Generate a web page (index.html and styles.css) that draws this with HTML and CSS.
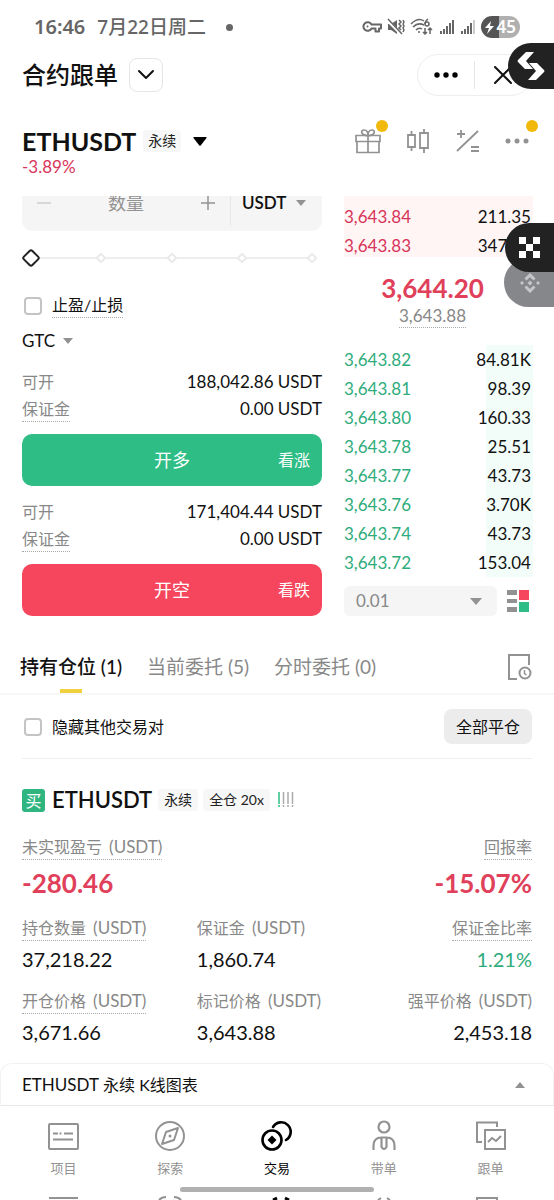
FILE: index.html
```html
<!DOCTYPE html>
<html lang="zh-CN">
<head>
<meta charset="utf-8">
<meta name="viewport" content="width=device-width, initial-scale=1">
<title>合约跟单</title>
<link rel="stylesheet" href="styles.css">
</head>
<body>
<div class="app">
  <div class="status">
    <span class="time">16:46</span><span class="date">7月22日周二</span><span class="status-dot"></span>
    <div class="status-icons">
      <svg width="20" height="14" viewBox="0 0 20 14" fill="none" stroke="#666" stroke-width="2"><path d="M9.500 4.500H19V8.500H17V11.500H13.500V8.500H9.500A4.300 4.300 0 1 1 9.500 4.500Z" stroke-linejoin="round"/><circle cx="5.500" cy="6.500" r="1" fill="#666" stroke="none"/></svg>
      <svg width="18" height="18" viewBox="0 0 18 18"><path d="M1 6h3l6-4v14l-6-4H1z" fill="#666"/><path d="M0 2l14 14" stroke="#fff" stroke-width="3"/><path d="M1 1l14 15M12 2l2 2-2 2 2 2-2 2 2 2M16 2l1 2-1 2 1 2-1 2 1 2-1 2" fill="none" stroke="#666" stroke-width="1.500"/></svg>
      <svg width="24" height="18" viewBox="0 0 24 18" fill="none" stroke="#666" stroke-width="1.500"><path d="M1 6Q8-1 14 3M3 9Q8 4 14 7M6 12Q9 9 12 11"/><circle cx="9" cy="14" r="1" fill="#666" stroke="none"/><path d="M18 1Q15 3 15 6"/><circle cx="17" cy="6" r="2"/><path d="M15 10v6m-2-2 2 2 2-2M20 16v-6m-2 2 2-2 2 2"/></svg>
      <svg width="16" height="16" viewBox="0 0 16 16" stroke="#666" stroke-width="2"><path d="M2 15v-3M5 15v-5M8 15V7M11 15V4M14 15V1"/></svg>
      <svg width="16" height="16" viewBox="0 0 16 16" stroke="#666" stroke-width="2"><path d="M2 15v-3M5 15v-5M8 15V7M11 15V4"/><path d="M14 15V1" stroke="#ccc"/></svg>
      <span class="battery"><svg width="9" height="13" viewBox="0 0 9 13"><path d="M6 0 0 7h4L2 13l7-8H5z" fill="#fff"/></svg>45</span>
    </div>
  </div>

  <header class="titlebar">
    <h1>合约跟单</h1>
    <button class="drop" aria-label="切换"><svg width="18" height="12" viewBox="0 0 18 12" fill="none" stroke="#111" stroke-width="2" stroke-linecap="round" stroke-linejoin="round"><path d="M2 2l7 7 7-7"/></svg></button>
    <div class="capsule">
      <button aria-label="更多"><svg width="24" height="6" viewBox="0 0 24 6"><circle cx="3" cy="3" r="2.700"/><circle cx="12" cy="3" r="2.700"/><circle cx="21" cy="3" r="2.700"/></svg></button>
      <button aria-label="关闭"><svg width="18" height="18" viewBox="0 0 18 18" stroke="#111" stroke-width="2" stroke-linecap="round"><path d="M1 1l16 16M17 1 1 17"/></svg></button>
    </div>
  </header>

  <section class="pair">
    <div class="pair-info">
      <div class="pair-name"><h2>ETHUSDT</h2><span class="tag">永续</span>
        <button aria-label="选择交易对"><svg width="14" height="9" viewBox="0 0 14 9"><path d="M1 0h12q1 0 .5 1L7.700 8.500q-.7.700-1.400 0L.5 1Q0 0 1 0"/></svg></button></div>
      <div class="pct">-3.89%</div>
    </div>
    <div class="tools">
      <button class="dotted" aria-label="奖励"><svg width="28" height="28" viewBox="0 0 28 28" fill="none" stroke="#929292" stroke-width="1.700"><path d="M2 8.500h24v6H2zM3 14.500v11h22v-11M14 8v18"/><path d="M14 8.500C7 9 6 3 10 3q4 0 4 5.500Q14 3 18 3c4 0 3 6-4 5.500"/></svg></button>
      <button aria-label="K线"><svg width="28" height="28" viewBox="0 0 28 28" fill="none" stroke="#929292" stroke-width="1.800"><path d="M4 8h7v12H4zM7.500 4v4M7.500 20v4M16 6h8v15h-8zM20 2v4M20 21v5"/></svg></button>
      <button aria-label="计算器"><svg width="28" height="28" viewBox="0 0 28 28" fill="none" stroke="#929292" stroke-width="1.800"><path d="M3 24 24 4M3 7h8M7 3v8M17 20h8M17 24h8"/></svg></button>
      <button class="dotted" aria-label="更多工具"><svg width="28" height="28" viewBox="0 0 28 28" fill="#929292"><circle cx="4" cy="14" r="2.500"/><circle cx="13" cy="14" r="2.500"/><circle cx="22" cy="14" r="2.500"/></svg></button>
    </div>
  </section>

  <main>
    <section class="trade">
      <form class="order">
        <div class="amount-clip"><div class="amount">
          <button type="button" class="minus" aria-label="减少"><svg width="16" height="16" viewBox="0 0 16 16"><path d="M1 8h14" stroke="#ccc" stroke-width="1.500"/></svg></button>
          <input type="text" placeholder="数量" aria-label="数量">
          <button type="button" aria-label="增加"><svg width="16" height="16" viewBox="0 0 16 16"><path d="M1 8h14M8 1v14" stroke="#929292" stroke-width="1.500"/></svg></button>
          <div class="unit"><select aria-label="单位"><option>USDT</option></select><svg class="arrow" width="10" height="6" viewBox="0 0 10 6"><path d="M0 0h10L5 6z"/></svg></div>
        </div></div>
        <div class="slider">
          <div class="marks"><i></i><i></i><i></i><i></i><i></i></div>
          <input type="range" min="0" max="100" value="0" aria-label="仓位比例">
        </div>
        <div class="check tpsl"><input type="checkbox" id="tpsl"><label for="tpsl" class="hint dark">止盈/止损</label></div>
        <div class="tif"><select aria-label="有效方式"><option>GTC</option></select><svg class="arrow" width="10" height="6" viewBox="0 0 10 6"><path d="M0 0h10L5 6z"/></svg></div>
        <dl class="facts first">
          <div><dt>可开</dt><dd>188,042.86 USDT</dd></div>
          <div><dt class="hint">保证金</dt><dd>0.00 USDT</dd></div>
        </dl>
        <button type="button" class="submit long"><span>开多</span><small>看涨</small></button>
        <dl class="facts">
          <div><dt>可开</dt><dd>171,404.44 USDT</dd></div>
          <div><dt class="hint">保证金</dt><dd>0.00 USDT</dd></div>
        </dl>
        <button type="button" class="submit short"><span>开空</span><small>看跌</small></button>
      </form>

      <div class="book">
        <table class="asks">
          <tr><td>3,643.84</td><td>211.35</td></tr>
          <tr><td>3,643.83</td><td>347.51</td></tr>
        </table>
        <div class="last">3,644.20</div>
        <div class="mark"><span class="hint">3,643.88</span></div>
        <table class="bids">
          <tr><td>3,643.82</td><td>84.81K</td></tr>
          <tr><td>3,643.81</td><td>98.39</td></tr>
          <tr><td>3,643.80</td><td>160.33</td></tr>
          <tr><td>3,643.78</td><td>25.51</td></tr>
          <tr><td>3,643.77</td><td>43.73</td></tr>
          <tr><td>3,643.76</td><td>3.70K</td></tr>
          <tr><td>3,643.74</td><td>43.73</td></tr>
          <tr><td>3,643.72</td><td>153.04</td></tr>
        </table>
        <div class="depth">
          <div class="precision"><select aria-label="精度"><option>0.01</option></select><svg class="arrow" width="12" height="7" viewBox="0 0 12 7"><path d="M0 0h12L6 7z"/></svg></div>
          <button aria-label="盘口显示"><svg width="22" height="22" viewBox="0 0 22 22"><path d="M0 0h10v5H0zM0 9h10v4H0zM0 17h10v5H0z" fill="#929292"/><path d="M12 0h10v10H12z" fill="#f6465d"/><path d="M12 12h10v10H12z" fill="#2ebd85"/></svg></button>
        </div>
      </div>
    </section>

    <nav class="tabs">
      <a href="#positions" class="on">持有仓位 (1)</a>
      <a href="#orders">当前委托 (5)</a>
      <a href="#twap">分时委托 (0)</a>
      <button aria-label="历史记录"><svg width="24" height="26" viewBox="0 0 24 26" fill="none" stroke="#929292" stroke-width="2"><path d="M9 25H1V1h20v10"/><circle cx="17" cy="19" r="5.500"/><path d="M16.500 16v3.500l2 1.500" stroke-width="1.500"/></svg></button>
    </nav>

    <section id="positions" class="positions">
      <div class="filter">
        <div class="check"><input type="checkbox" id="hide"><label for="hide">隐藏其他交易对</label></div>
        <button class="close-all">全部平仓</button>
      </div>
      <div class="pos-title">
        <span class="side">买</span><h3>ETHUSDT</h3><span class="tag">永续</span><span class="tag">全仓 20x</span>
        <svg width="16" height="16" viewBox="0 0 16 16" stroke-width="1.500" stroke="#aaa"><path d="M1 0v12M1 13v2" stroke="#2ebd85"/><path d="M5.500 0v12M5.500 13v2M10 0v12M10 13v2M14.500 0v12M14.500 13v2"/></svg>
      </div>
      <div class="summary">
        <div><span class="hint">未实现盈亏 <b>(USDT)</b></span><strong>-280.46</strong></div>
        <div class="end"><span class="hint">回报率</span><strong>-15.07%</strong></div>
      </div>
      <div class="stats">
        <div><span class="hint">持仓数量 <b>(USDT)</b></span><em>37,218.22</em></div>
        <div><span class="hint plain">保证金 <b>(USDT)</b></span><em>1,860.74</em></div>
        <div class="end"><span class="hint">保证金比率</span><em class="up">1.21%</em></div>
        <div><span class="hint">开仓价格 <b>(USDT)</b></span><em>3,671.66</em></div>
        <div><span class="hint plain">标记价格 <b>(USDT)</b></span><em>3,643.88</em></div>
        <div class="end"><span class="hint plain">强平价格 <b>(USDT)</b></span><em>2,453.18</em></div>
      </div>
    </section>
  </main>

  <button class="kline"><span><b>ETHUSDT</b> 永续 K线图表</span><svg class="arrow" width="10" height="6" viewBox="0 0 10 6"><path d="M0 6h10L5 0z"/></svg></button>

  <nav class="bottom">
    <a href="#projects"><svg width="32" height="32" viewBox="0 0 32 32" fill="none" stroke="currentColor" stroke-width="2"><rect x="2" y="4" width="29" height="25" rx="1"/><path d="M6 13.500h5M12.500 13.500h2M17 13.500h9M6 19.500h20"/></svg>项目</a>
    <a href="#explore"><svg width="32" height="32" viewBox="0 0 32 32" fill="none" stroke="currentColor" stroke-width="2"><circle cx="16" cy="16" r="14"/><path d="M24 8l-4 12-12 4 4-12z" stroke-linejoin="round"/><circle cx="16" cy="16" r="1.500" fill="currentColor" stroke="none"/></svg>探索</a>
    <a href="#trade" class="on"><svg width="32" height="32" viewBox="0 0 32 32" fill="none" stroke="currentColor" stroke-width="2.600"><circle cx="11" cy="20" r="9.500"/><path d="M12 7A9.500 9.500 0 1 1 25 20" stroke-linecap="round"/><path d="M11 15.500l4.500 4.500-4.500 4.500L6.500 20z" fill="currentColor" stroke="none"/></svg>交易</a>
    <a href="#lead"><svg width="32" height="32" viewBox="0 0 32 32" fill="none" stroke="currentColor" stroke-width="2.200"><circle cx="16" cy="7" r="5.500"/><path d="M5.500 30v-4q0-8.500 8-8.500h5q8 0 8 8.500v4M13.500 18v9q2.500 4 5 0v-9"/></svg>带单</a>
    <a href="#copy"><svg width="32" height="32" viewBox="0 0 32 32" fill="none" stroke="currentColor" stroke-width="2"><path d="M7 22H2V2.500h20V7M10 10h20v19H10zM13 22l4-4 4 3 5-5"/></svg>跟单</a>
  </nav>
  <div class="home"></div>
  <div class="peek">
    <svg width="32" height="4" viewBox="0 0 32 4"><path d="M2 2h29" stroke="#929292" stroke-width="2"/></svg>
    <svg width="32" height="4" viewBox="0 0 32 4" fill="none" stroke="#929292" stroke-width="2"><path d="M5 4q3-3 7-3M20 1q4 0 7 3"/></svg>
    <svg width="32" height="4" viewBox="0 0 32 4" fill="none" stroke="#000" stroke-width="3"><path d="M12 4l4-2M24 2l4 2"/></svg>
    <svg width="32" height="4" viewBox="0 0 32 4" fill="none" stroke="#929292" stroke-width="2"><path d="M10 4l3-2M19 2l3 2"/></svg>
    <svg width="32" height="4" viewBox="0 0 32 4" fill="none" stroke="#929292" stroke-width="2"><path d="M2 4V2h20v2"/></svg>
  </div>

  <button class="float bitget" aria-label="Bitget"><svg width="28" height="30" viewBox="0 0 28 30" fill="#fff"><path d="M9 1h8L9 10l7 8H8L1 11q-1-1 0-2zM19 29h-8l8-9-7-8h8l7 7q1 1 0 2z"/></svg></button>
  <button class="float binance" aria-label="Binance"><svg width="20" height="20" viewBox="0 0 20 20" fill="none" stroke="#c4c6c8" stroke-width="3"><path d="M5.500 6.500 10 2l4.500 4.500M5.500 13.500 10 18l4.500-4.500"/><path d="M2 8l2 2-2 2-2-2zM18 8l2 2-2 2-2-2zM10 7.500l2.500 2.500-2.500 2.500L7.500 10z" fill="#c4c6c8" stroke="none"/></svg></button>
  <button class="float okx" aria-label="OKX"><svg width="21" height="21" viewBox="0 0 21 21" fill="#fff"><path d="M0 0h7v7H0zM14 0h7v7h-7zM7 7h7v7H7zM0 14h7v7H0zM14 14h7v7h-7z"/></svg></button>
</div>
</body>
</html>
```
FILE: styles.css
```css
* { box-sizing: border-box; }
body {
  margin: 0;
  background: #fff;
  color: #111;
  font: 16px/24px Lato, "Noto Sans CJK SC", sans-serif;
}
h1, h2, h3, dl, dd { margin: 0; }
button, select, input { font: inherit; color: inherit; margin: 0; }
button { background: none; border: 0; padding: 0; }
button svg { display: block; }
select { appearance: none; border: 0; background: none; padding: 0; outline: 0; }
a { color: inherit; text-decoration: none; }
.arrow { fill: #929292; flex: none; }
.app { position: relative; overflow: hidden; min-height: 100vh; }

.status {
  display: flex; align-items: center; height: 54px; padding: 0 34px;
  font-family: "Noto Sans", "Noto Sans CJK SC", sans-serif;
  font-size: 19px; font-weight: 600; color: #666;
}
.time { font-size: 20px; }
.date { margin-left: 12px; font-weight: 500; }
.status-dot { width: 7px; height: 7px; margin-left: 20px; border-radius: 50%; background: #666; }
.status-icons { display: flex; align-items: center; gap: 5px; margin-left: auto; }
.battery {
  display: flex; align-items: center; gap: 3px; height: 22px; padding: 0 4px;
  border-radius: 11px; background: linear-gradient(90deg, #555 45%, #b0b0b0 45%);
  color: #fff; font-size: 17px;
}

.titlebar { display: flex; align-items: center; height: 42px; padding: 0 22px; }
.titlebar h1 { font-size: 24px; font-weight: 500; line-height: 34px; }
.drop {
  display: grid; place-items: center; width: 34px; height: 34px; margin-left: 11px;
  border: 1px solid #e6e6e6; border-radius: 8px;
}
.capsule {
  display: flex; align-items: center; width: 115px; height: 42px; margin-left: auto;
  border: 1px solid #eee; border-radius: 21px;
}
.capsule button { display: grid; place-items: center; flex: 1; height: 28px; }
.capsule button + button { border-left: 1px solid #e6e6e6; }

.pair { display: flex; justify-content: space-between; padding: 30px 22px 18px; }
.pair-name { display: flex; align-items: center; height: 30px; }
.pair-name h2 { font-size: 25px; font-weight: 700; }
.pair-name button { margin-left: 12px; }
.tag {
  padding: 0 5px; border-radius: 3px; background: #f7f7f7;
  font-size: 14px; line-height: 22px; color: #222;
}
.pair-name .tag { margin-left: 7px; }
.pct { font-size: 17px; line-height: 22px; color: #d8345a; }
.tools { display: flex; gap: 22px; height: 30px; align-items: center; }
.tools button { position: relative; }
.dotted::after {
  content: ""; position: absolute; right: -6px; top: -7px;
  width: 12px; height: 12px; border-radius: 50%; background: #f0b90b;
}

.trade {
  display: grid; grid-template-columns: minmax(0, 300fr) minmax(0, 189fr);
  column-gap: 22px; padding: 0 21px 0 22px;
}
.amount-clip { display: flex; align-items: flex-end; height: 35px; overflow: hidden; }
.amount {
  display: flex; align-items: center; flex: 1; min-width: 0; height: 56px; padding: 0 16px 0 14px;
  border-radius: 10px; background: #f5f5f5;
}
.amount input {
  flex: 1; width: 0; min-width: 0; border: 0; background: none; text-align: center; font-size: 18px; outline: 0;
}
.amount input::placeholder { color: #929292; }
.unit {
  display: flex; flex: none; align-items: center; gap: 9px; height: 46px; margin-left: 14px; padding-left: 11px;
  border-left: 1px solid #e6e6e6; font-size: 17px; font-weight: 600;
}
.unit select { flex: none; }
.slider { display: grid; align-items: center; height: 26px; margin-top: 14px; }
.slider > * { grid-area: 1 / 1; }
.marks {
  display: flex; justify-content: space-between; align-items: center; padding: 0 6px 0 5px; height: 26px;
  background: linear-gradient(#eee, #eee) center / calc(100% - 20px) 2px no-repeat;
}
.marks i { width: 8px; height: 8px; border: 2px solid #eaeaea; border-radius: 2px; background: #fff; transform: rotate(45deg); }
.slider input { appearance: none; width: auto; height: 20px; margin: 0 2px; background: none; }
.slider input::-webkit-slider-thumb {
  appearance: none; width: 14px; height: 14px; border: 2px solid #222; border-radius: 3px;
  background: #fff; transform: rotate(45deg);
}
.check { display: flex; align-items: center; gap: 10px; padding-left: 2px; }
.check input {
  appearance: none; width: 18px; height: 18px; border: 2px solid #c4c4c4; border-radius: 4px; background: #fff;
}
.tpsl { margin-top: 22px; }
.hint { display: inline-block; border-bottom: 1px dotted #aaa; color: #888; }
.hint.dark { color: #111; }
.hint.plain { border-color: transparent; }
.hint b { margin-left: 3px; font-size: 17px; font-weight: 400; }
.tif { display: flex; align-items: center; gap: 7px; height: 22px; margin-top: 12px; font-size: 17px; }
.facts { display: grid; gap: 3px; margin-top: 14px; }
.facts.first { margin-top: 18px; }
.facts div { display: flex; justify-content: space-between; }
.facts dt { color: #888; }
.facts dd { font-size: 17px; }
.submit {
  display: grid; grid-template-columns: 1fr auto 1fr; align-items: center;
  width: 100%; height: 52px; margin-top: 12px; padding: 0 12px; border-radius: 10px; color: #fff;
}
.submit span { grid-column: 2; font-size: 18px; }
.submit small { font-size: 16px; text-align: right; }
.long { background: #2ebd85; }
.short { background: #f6465d; }

.book { font-size: 17px; }
.book table { width: 100%; border-spacing: 0; }
.book td { height: 29px; padding: 0; line-height: 28px; }
.book td:last-child { padding-right: 2px; text-align: right; }
.asks { padding-top: 6px; background: linear-gradient(#fff5f5, #fff5f5) top / 100% 61px no-repeat; }
.asks td:first-child { color: #d8345a; }
.bids { margin-top: 17px; background: linear-gradient(#f2fcf8, #f2fcf8) right / 47px 100% no-repeat; }
.bids td:first-child { color: #2eac7c; }
.last { margin: 11px 12px 0 0; font-size: 26px; font-weight: 700; line-height: 34px; text-align: center; color: #e0405a; }
.mark { margin-right: 12px; text-align: center; line-height: 22px; height: 23px; }
.depth { display: flex; align-items: center; gap: 10px; margin-top: 9px; padding-right: 4px; }
.precision {
  display: flex; align-items: center; flex: 1; height: 30px; padding: 0 15px 0 12px;
  border-radius: 6px; background: #f5f5f5; color: #888;
}
.precision select { flex: 1; }

.tabs {
  display: flex; align-items: flex-start; gap: 25px; margin-top: 38px; padding: 0 22px 0 20px;
  border-bottom: 2px solid #f7f7f7; font-size: 19px; line-height: 26px; color: #888;
}
.tabs a { display: grid; justify-items: center; gap: 9px; }
.tabs a::after { content: ""; width: 22px; height: 4px; }
.tabs .on { color: #111; font-weight: 500; }
.tabs .on::after { background: #f0d03c; }
.tabs button { margin-left: auto; }

.positions { padding: 0 22px 19px; }
.filter {
  display: flex; align-items: center; justify-content: space-between; height: 64px;
  border-bottom: 1px solid #eee;
}
.close-all { height: 35px; padding: 0 12px; border-radius: 8px; background: #ececec; }
.pos-title { display: flex; align-items: center; height: 30px; margin-top: 26px; }
.side {
  width: 23px; height: 23px; border-radius: 3px; background: #2eb580; color: #fff;
  font-size: 16px; line-height: 23px; text-align: center;
}
.pos-title h3 { margin: 0 6px 0 7px; font-size: 22px; font-weight: 600; }
.pos-title .tag { padding: 0 6px; }
.pos-title .tag + .tag { margin-left: 5px; }
.pos-title svg { margin-left: 8px; }
.summary { display: flex; justify-content: space-between; margin-top: 20px; }
.summary > div, .stats > div { display: flex; flex-direction: column; align-items: flex-start; }
.summary .end, .stats .end { align-items: flex-end; }
.summary strong { margin-top: 8px; font-size: 26px; line-height: 30px; color: #e0405a; }
.stats { display: grid; grid-template-columns: 12fr 13fr 10fr; row-gap: 18px; margin-top: 18px; white-space: nowrap; }
.stats em { margin-top: 6px; font-size: 20px; font-style: normal; }
.stats .up { color: #2eac7c; }

.kline {
  display: flex; align-items: center; justify-content: space-between; width: 100%; height: 43px; padding: 0 28px 0 21px;
  border: 1px solid #f2f2f2; border-bottom-color: #e8e8e8; border-radius: 12px 12px 0 0; font-size: 16px;
}
.kline b { font-size: 17px; font-weight: 400; }
.bottom { display: grid; grid-template-columns: repeat(5, 1fr); padding: 14px 10px 0; }
.bottom a { display: grid; justify-items: center; gap: 7px; font-size: 13px; line-height: 18px; color: #929292; }
.bottom .on { color: #000; }
.home { width: 35%; height: 5px; margin: 10px auto 0; border-radius: 3px; background: #b0b0b0; }
.peek { display: grid; grid-template-columns: repeat(5, 1fr); justify-items: center; height: 4px; margin-top: 4px; padding: 0 10px; overflow: hidden; }

.float {
  position: absolute; right: 0; display: flex; align-items: center; width: 49px; height: 49px; padding-left: 14px;
  border-radius: 25px 0 0 25px; background: #222;
}
.bitget { top: 43px; width: 46px; height: 46px; padding-left: 9px; }
.okx { top: 223px; }
.binance { top: 258px; width: 50px; padding-left: 16px; background: #85878a; }
```
